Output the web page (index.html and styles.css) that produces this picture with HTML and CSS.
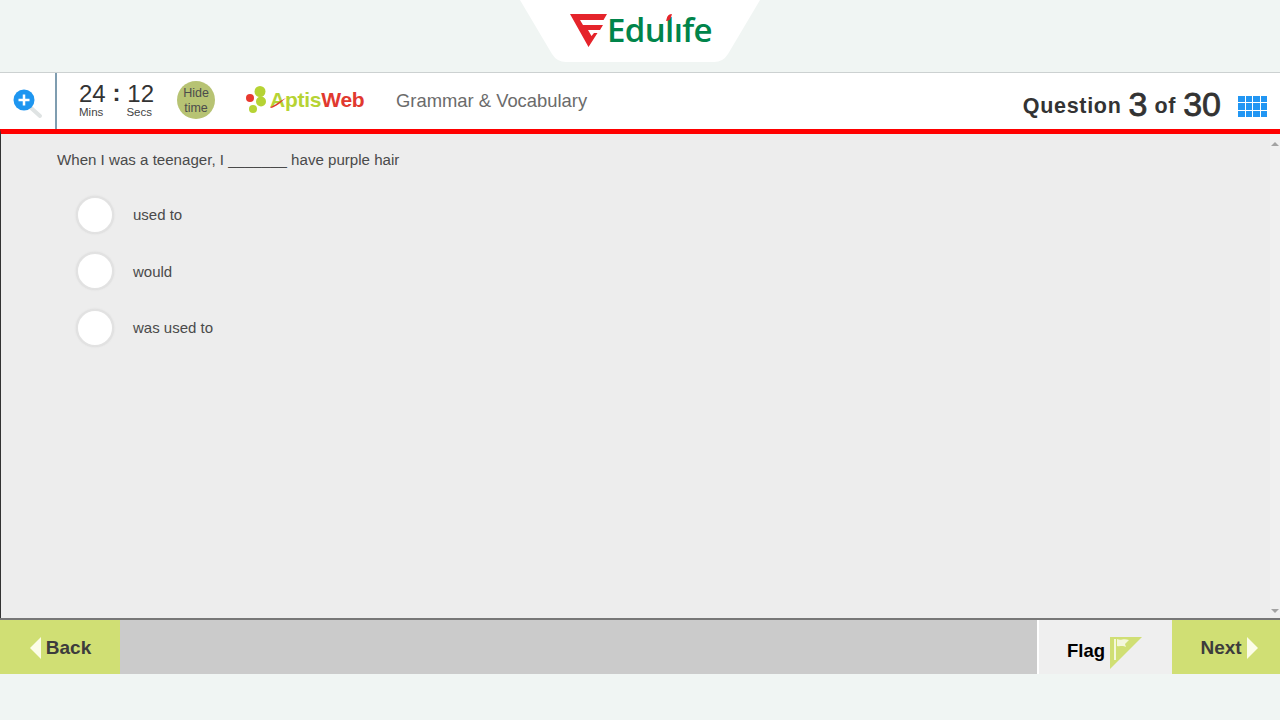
FILE: index.html
```html
<!DOCTYPE html>
<html lang="en">
<head>
    <meta charset="UTF-8">
    <title>Aptis Grammar &amp; Vocabulary</title>
    <link rel="stylesheet" href="styles.css">
</head>
<body>

<div class="brand-strip">
    <div class="brand-tab">
        <svg class="brand-mark" width="37" height="33" viewBox="0 0 37 33">
            <path fill="#e5242b" d="M0 0H37L33.500 6H10L13 11H33L30 16H18L21.500 22 24 19H27.500L18.500 33Z"/>
        </svg>
        <span class="brand-name">Edulıfe<i class="brand-leaf"></i></span>
    </div>
</div>

<header class="top-bar">
    <div class="zoom-box">
        <svg width="30" height="30" viewBox="0 0 30 30">
            <path d="M17 18L27 27" stroke="#dfe3e3" stroke-width="4" stroke-linecap="round"/>
            <circle cx="11" cy="11" r="10.5" fill="#1e96f0"/>
            <path d="M5.5 11H16.500M11 5.500V16.500" stroke="#fff" stroke-width="2.500"/>
        </svg>
    </div>
    <div class="timer">
        <div class="timer-digits"><span>24</span><b>:</b><span>12</span></div>
        <div class="timer-labels"><span>Mins</span><span>Secs</span></div>
    </div>
    <button class="hide-time">Hide<br>time</button>
    <div class="aptis-logo">
        <svg width="24" height="30" viewBox="0 0 24 30">
            <circle cx="4" cy="12" r="4" fill="#e8392f"/>
            <circle cx="14" cy="5.500" r="5.500" fill="#b6d334"/>
            <circle cx="15" cy="15.500" r="5" fill="#b6d334"/>
            <circle cx="7" cy="23" r="4" fill="#b6d334"/>
        </svg>
        <span class="aptis-word">Aptis</span><span class="web-word">Web</span>
        <svg class="aptis-swoosh" width="24" height="24" viewBox="0 0 24 24">
            <path fill="#e1392f" d="M0 21C5 20 9 15 16 12C11 16 6 21 1 22Z"/>
        </svg>
    </div>
    <div class="section-name">Grammar &amp; Vocabulary</div>
    <div class="question-count">
        Question <span class="big-num">3</span> of <span class="big-num">30</span>
    </div>
    <div class="grid-icon">
        <i></i><i></i><i></i><i></i><i></i><i></i><i></i><i></i><i></i><i></i><i></i><i></i>
    </div>
</header>

<main class="content">
    <div class="question-area">
        <p class="question">When I was a teenager, I _______ have purple hair</p>
        <div class="option"><span class="radio"></span><span>used to</span></div>
        <div class="option"><span class="radio"></span><span>would</span></div>
        <div class="option"><span class="radio"></span><span>was used to</span></div>
    </div>
    <div class="scroll-col">
        <span class="arrow-up"></span>
        <span class="arrow-down"></span>
    </div>
</main>

<footer class="bottom-bar">
    <button class="nav-btn back"><span class="tri-left"></span>Back</button>
    <div class="spacer"></div>
    <button class="flag-btn">
        Flag
        <svg width="32" height="32" viewBox="0 0 32 32">
            <path fill="#d0df74" d="M0 0H32L0 32Z"/>
            <path fill="#f4f7dc" d="M4 2H6V23H4ZM7 2C11 4 13 1 19 3L15 7 16 10C12 8 10 10 7 9Z"/>
        </svg>
    </button>
    <button class="nav-btn next">Next<span class="tri-right"></span></button>
</footer>

</body>
</html>
```

FILE: styles.css
```css
* {
    box-sizing: border-box;
}

body {
    margin: 0;
    height: 720px;
    overflow: hidden;
    background: #f0f5f3;
    font-family: "Liberation Sans", Arial, sans-serif;
    color: #444;
}

/* brand strip */
.brand-strip {
    height: 72px;
    display: flex;
    justify-content: center;
}

.brand-tab {
    width: 240px;
    height: 62px;
    background: #fff;
    clip-path: path('M0 0H240L208 54Q203 62 194 62H46Q37 62 32 54Z');
    display: flex;
    align-items: flex-start;
    justify-content: center;
    padding: 14px 0 0 2px;
}

.brand-mark {
    flex: none;
}

.brand-name {
    position: relative;
    font-family: "Open Sans", sans-serif;
    font-size: 33px;
    font-weight: 600;
    line-height: 32px;
    color: #00844a;
    letter-spacing: -0.6px;
}

.brand-leaf {
    position: absolute;
    left: 60px;
    top: 0;
    width: 4px;
    height: 7px;
    background: #e5242b;
    border-radius: 4px 0;
    transform: skewX(-15deg);
}

/* header */
.top-bar {
    height: 57px;
    background: #fff;
    border-top: 1px solid #ccd1d1;
    display: flex;
    align-items: center;
}

.zoom-box {
    width: 57px;
    height: 56px;
    border-right: 2px solid #7f9db0;
    padding: 16px 0 0 13px;
}

.zoom-box svg {
    display: block;
}

.timer {
    width: 75px;
    margin: -3px 0 0 22px;
    color: #333;
}

.timer-digits {
    display: flex;
    justify-content: space-between;
    font-size: 24px;
    line-height: 24px;
}

.timer-digits b {
    margin-top: -1px;
}

.timer-labels {
    display: flex;
    justify-content: space-between;
    font-size: 11.500px;
    line-height: 12px;
    color: #444;
    padding-right: 2px;
}

.hide-time {
    width: 38px;
    height: 38px;
    margin: -2px 0 0 23px;
    padding: 2px 0 0;
    border: none;
    border-radius: 50%;
    background: #b7c373;
    color: #4c4c4c;
    font-family: inherit;
    font-size: 12.500px;
    line-height: 15px;
}

.aptis-logo {
    position: relative;
    width: 120px;
    margin-left: 31px;
    display: flex;
    align-items: center;
    font-size: 21px;
    font-weight: bold;
    letter-spacing: -0.25px;
}

.aptis-word {
    color: #b6d334;
    margin-top: -3px;
}

.web-word {
    color: #e1392f;
    margin-top: -3px;
}

.aptis-swoosh {
    position: absolute;
    left: 24px;
    top: 0;
}

.section-name {
    margin-left: 30px;
    font-size: 18.400px;
    color: #6b6b6b;
}

.question-count {
    margin-left: auto;
    padding-top: 11px;
    font-size: 21.500px;
    font-weight: bold;
    letter-spacing: 0.7px;
    color: #333;
    display: flex;
    align-items: center;
    gap: 7px;
}

.big-num {
    font-size: 34px;
    font-weight: normal;
    -webkit-text-stroke: 0.8px #333;
    letter-spacing: 0;
    margin-top: -4px;
}

.grid-icon {
    width: 29px;
    margin: 11px 13px 0 17px;
    display: grid;
    grid-template-columns: repeat(4, 6.500px);
    grid-auto-rows: 6.500px;
    gap: 1px;
}

.grid-icon i {
    background: #2196f3;
}

/* question */
.content {
    height: 489px;
    background: #ededed;
    border-top: 5px solid #f00;
    border-left: 1px solid #333;
    display: flex;
}

.question-area {
    flex: 1;
    padding: 0 0 0 56px;
    font-size: 15px;
    color: #4a4a4a;
}

.question {
    margin: 17px 0 27.500px;
    font-size: 15.100px;
    line-height: 17px;
}

.option {
    display: flex;
    align-items: center;
    gap: 19px;
    height: 38px;
    margin: 0 0 18.500px 19px;
}

.radio {
    width: 38px;
    height: 38px;
    border-radius: 50%;
    background: #fff;
    border: 2px solid #e2e2e2;
    box-shadow: 0 0 2px #d8d8d8;
}

.scroll-col {
    width: 10px;
    background: #f0f0f0;
    display: flex;
    flex-direction: column;
    justify-content: space-between;
    align-items: center;
    padding: 8px 0 5px;
}

.arrow-up {
    border: 4px solid transparent;
    border-top: none;
    border-bottom: 4px solid #a3a3a3;
}

.arrow-down {
    border: 4px solid transparent;
    border-bottom: none;
    border-top: 4px solid #a3a3a3;
}

/* footer */
.bottom-bar {
    height: 56px;
    border-top: 2px solid #777;
    background: #cbcbcb;
    display: flex;
}

.spacer {
    flex: 1;
}

.nav-btn {
    display: flex;
    align-items: center;
    justify-content: center;
    gap: 5px;
    border: none;
    padding: 2px 0 0;
    background: #d0df74;
    color: #3c3c3c;
    font-family: inherit;
    font-size: 19px;
    font-weight: bold;
}

.back {
    width: 120px;
    padding-left: 1px;
}

.next {
    width: 108px;
    padding-left: 6px;
}

.tri-left {
    border-style: solid;
    border-width: 11px 11px 11px 0;
    border-color: transparent #fcfde8 transparent transparent;
    margin-top: -1px;
}

.tri-right {
    border-style: solid;
    border-width: 11px 0 11px 11px;
    border-color: transparent transparent transparent #fcfde8;
    margin-top: -1px;
}

.flag-btn {
    width: 135px;
    display: flex;
    align-items: center;
    gap: 5px;
    padding: 8px 0 0 28px;
    border: none;
    border-left: 2px solid #fff;
    background: #efefef;
    color: #000;
    font-family: inherit;
    font-size: 18.500px;
    font-weight: bold;
}

.flag-btn svg {
    margin-top: 4px;
}
```
